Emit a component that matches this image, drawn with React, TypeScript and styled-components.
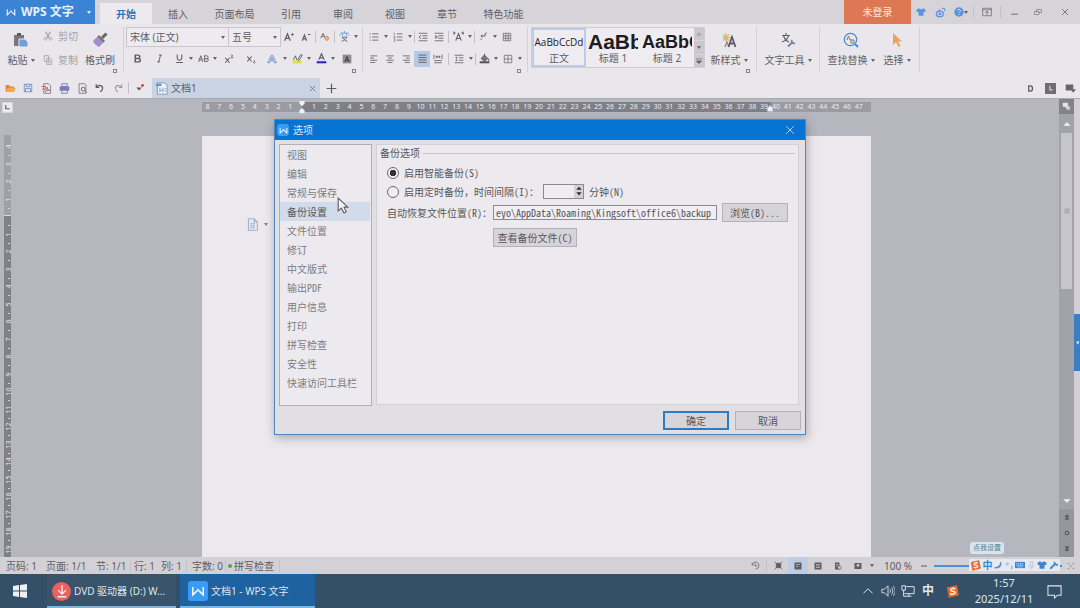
import React from "react";
import styled, { createGlobalStyle, css } from "styled-components";

const ui = `"Noto Sans", "Noto Sans CJK SC", sans-serif`;
const song = `"Noto Sans Mono CJK SC", "Liberation Mono", "Noto Sans CJK SC", monospace`;

const GlobalStyle = createGlobalStyle`
  * { box-sizing: border-box; }
  body { margin: 0; font: 10px/14px ${ui}; color: #5f5d63; background: #b7b7bf; }
  button, input, select { font: inherit; color: inherit; margin: 0; padding: 0; border: 0; background: none; border-radius: 0; }
  a { color: inherit; text-decoration: none; }
  ul { list-style: none; margin: 0; padding: 0; }
`;

/* ---------- shared ---------- */

const Svg = styled.svg<{ $s?: number }>`
  width: ${(p) => p.$s ?? 12}px;
  height: ${(p) => p.$s ?? 12}px;
  flex: none;
  display: block;
  fill: none;
  stroke: currentColor;
  stroke-width: 1.3;
`;

type IconProps = { s?: number; children: React.ReactNode; color?: string };
const Icon = ({ s, children, color }: IconProps) => (
  <Svg $s={s} viewBox="0 0 16 16" color={color} aria-hidden="true">
    {children}
  </Svg>
);

const Caret = styled.i`
  flex: none;
  width: 0;
  height: 0;
  border: 2px solid transparent;
  border-top: 3px solid #66646a;
  border-bottom: 0;
`;

const Spacer = styled.div`
  flex: 1;
`;

const VLine = styled.span<{ $h?: number; $m?: number }>`
  flex: none;
  width: 1px;
  height: ${(p) => p.$h ?? 12}px;
  margin: 0 ${(p) => p.$m ?? 0}px;
  background: #c3c1c8;
`;

const Slot = styled.button<{ $w?: number; $on?: boolean }>`
  flex: none;
  width: ${(p) => p.$w ?? 16}px;
  height: 16px;
  display: flex;
  align-items: center;
  justify-content: center;
  background: ${(p) => (p.$on ? "#b3c9e6" : "none")};
`;

const Drop = ({ label }: { label: string }) => (
  <Slot $w={8} aria-label={label}>
    <Caret />
  </Slot>
);

const WMark = () => (
  <path d="M2 3.5v9l5.2-5M14 3.5v9l-5.2-5M7.2 7.5 8 6.5l.8 1" strokeWidth="1.8" />
);

/* ---------- window ---------- */

const Screen = styled.div`
  min-height: 100vh;
  display: flex;
  flex-direction: column;
`;

const AppWindow = styled.main`
  position: relative;
  flex: 1;
  display: flex;
  flex-direction: column;
`;

const TitleBar = styled.header`
  display: flex;
  align-items: flex-end;
  height: 24px;
  background: #d6d3d9;
`;

const Brand = styled.button`
  align-self: stretch;
  display: flex;
  align-items: center;
  width: 95px;
  padding: 0 4px 0 6px;
  gap: 5px;
  background: #3b83d5;
  color: #e9f0f9;
  font-size: 12px;
  font-weight: 700;
  white-space: nowrap;
  ${Caret} {
    margin-left: auto;
    border-top-color: #e9f0f9;
  }
`;

const Tabs = styled.nav`
  display: flex;
  margin-left: 5px;
`;

const Tab = styled.a<{ $on?: boolean; $wide?: boolean }>`
  width: ${(p) => (p.$wide ? 61 : 52)}px;
  height: 21px;
  padding-top: 4px;
  text-align: center;
  ${(p) =>
    p.$on &&
    css`
      background: #eceaee;
      color: #3172bd;
      font-weight: 700;
    `}
`;

const Login = styled.button`
  align-self: stretch;
  width: 67px;
  background: #dc7854;
  color: #f6e6e0;
`;

const WindowTools = styled.div`
  align-self: stretch;
  display: flex;
  align-items: center;
  color: #727076;
`;

/* ---------- ribbon ---------- */

const Ribbon = styled.section`
  display: flex;
  height: 54px;
  background: #e9e7eb;
`;

const Group = styled.div<{ $w: number; $pad?: number }>`
  flex: none;
  position: relative;
  width: ${(p) => p.$w}px;
  padding: 3px 0 0 ${(p) => p.$pad ?? 0}px;
  display: flex;
  &::after {
    content: "";
    position: absolute;
    right: 0;
    top: 3px;
    height: 45px;
    width: 1px;
    background: #d3d1d7;
  }
`;

const Launcher = styled.button`
  position: absolute;
  right: 7px;
  bottom: 5px;
  width: 4px;
  height: 4px;
  border: 1px solid #86848a;
`;

const BigButton = styled.button<{ $w: number }>`
  flex: none;
  width: ${(p) => p.$w}px;
  height: 46px;
  display: flex;
  flex-direction: column;
  align-items: center;
  padding-top: 5px;
  gap: 5px;
  white-space: nowrap;
`;

const Label = styled.span`
  display: flex;
  align-items: center;
  gap: 3px;
`;

const Stack = styled.div<{ $gap?: number }>`
  display: flex;
  flex-direction: column;
  gap: ${(p) => p.$gap ?? 6}px;
`;

const SmallButton = styled.button`
  display: flex;
  align-items: center;
  gap: 5px;
  height: 18px;
  width: 42px;
  padding-left: 2px;
  color: #a3a1a7;
`;

const ToolRow = styled.div<{ $pad?: number }>`
  display: flex;
  align-items: center;
  height: 19px;
  padding-left: ${(p) => p.$pad ?? 0}px;
`;

const Combo = styled.span<{ $w: number }>`
  position: relative;
  width: ${(p) => p.$w}px;
  height: 20px;
  margin-right: -1px;
  border: 1px solid #c8c6cc;
  background: #edebef;
  select {
    width: 100%;
    height: 18px;
    padding-left: 3px;
    appearance: none;
    outline: 0;
  }
  ${Caret} {
    position: absolute;
    right: 3px;
    top: 8px;
    pointer-events: none;
  }
`;

const Gallery = styled.div`
  display: flex;
  width: 174px;
  height: 41px;
  border: 1px solid #cfcdd4;
  background: #eeecf0;
`;

const StyleCard = styled.button<{ $on?: boolean }>`
  flex: none;
  width: 54px;
  overflow: hidden;
  border: 2px solid ${(p) => (p.$on ? "#bdcce6" : "transparent")};
  display: flex;
  flex-direction: column;
  align-items: center;
`;

const Sample = styled.span<{ $size: number; $bold?: boolean }>`
  height: 22px;
  width: 50px;
  overflow: hidden;
  text-align: ${(p) => (p.$bold ? "left" : "center")};
  white-space: nowrap;
  color: #1d1c1f;
  line-height: 24px;
  font-family: ${(p) => (p.$bold ? `"Liberation Sans", sans-serif` : `"Open Sans", sans-serif`)};
  font-size: ${(p) => p.$size}px;
  font-weight: ${(p) => (p.$bold ? 700 : 400)};
`;

const GalleryScroll = styled.div`
  flex: 1;
  display: flex;
  flex-direction: column;
  background: #cac8ce;
  button {
    flex: 1;
    display: flex;
    align-items: center;
    justify-content: center;
  }
  button + button {
    border-top: 1px solid #d8d6db;
  }
`;

/* ---------- quick access row ---------- */

const QuickBar = styled.div`
  display: flex;
  align-items: center;
  height: 20px;
  padding-left: 1px;
  background: #e9e7eb;
`;

const DocTab = styled.div`
  display: flex;
  align-items: center;
  align-self: stretch;
  width: 168px;
  padding: 0 4px 0 3px;
  gap: 3px;
  margin-left: 2px;
  background: #c9d3e3;
`;

/* ---------- workspace ---------- */

const Workspace = styled.section`
  flex: 1;
  display: flex;
  background: #b6b6bf;
  border-top: 1px solid #a9a9b0;
`;

const LeftRail = styled.div`
  width: 13px;
  padding: 3px 0 0 2px;
  display: flex;
  flex-direction: column;
`;

const TabStop = styled.button`
  flex: none;
  width: 11px;
  height: 11px;
  background: #eceaee;
  border: 1px solid #d6d4da;
  margin-bottom: 22px;
  display: flex;
  align-items: center;
  justify-content: center;
`;

const VRuler = styled.div`
  flex: 1 0 420px;
  width: 7px;
  margin-left: 2px;
  overflow: hidden;
  color: #e8e7ec;
  font-size: 7px;
  line-height: 9px;
  background: linear-gradient(#a0a0a8 80px, #d8d8dd 80px, #d8d8dd 81px, #808088 81px);
`;

const VList = styled.div`
  display: grid;
  grid-auto-rows: 1fr;
  justify-items: center;
  height: 420px;
  margin-top: 7px;
`;

const VCell = styled.span`
  display: flex;
  flex-direction: column;
  align-items: center;
  i {
    height: 9px;
    width: 9px;
    text-align: center;
    font-style: normal;
    transform: rotate(-90deg);
  }
  &::after {
    content: "";
    width: 2px;
    height: 1px;
    margin-top: 4px;
    background: #d4d4da;
  }
`;

const Canvas = styled.div`
  flex: 1;
  display: flex;
  flex-direction: column;
  align-items: center;
`;

const HRuler = styled.div`
  position: relative;
  display: flex;
  width: 669px;
  height: 10px;
  margin-top: 3px;
  padding-right: 6px;
  color: #ecebf0;
  font-size: 7px;
  line-height: 10px;
  background: linear-gradient(90deg, #9b9ba3 15%, #7f7f87 15%, #7f7f87 85%, #9b9ba3 85%);
  span {
    flex: 1 1 0;
    width: 0;
    display: flex;
    justify-content: center;
  }
`;

const Marker = styled.div<{ $at: number }>`
  position: absolute;
  left: ${(p) => p.$at}%;
  top: -2px;
  margin-left: -7px;
`;

const Paper = styled.article`
  flex: 1;
  width: 669px;
  margin-top: 24px;
  background: #ebe9ee;
  position: relative;
`;

const PasteHint = styled.button`
  position: absolute;
  left: 44px;
  top: 82px;
  display: flex;
  align-items: center;
  gap: 5px;
  opacity: 0.8;
`;

const ScrollRail = styled.div`
  width: 15px;
  display: flex;
  flex-direction: column;
  align-items: center;
  background: #a2a2aa;
  color: #e8e7ec;
`;

const RailTop = styled.button`
  width: 15px;
  height: 15px;
  display: flex;
  align-items: center;
  justify-content: center;
  background: #828289;
`;

const RailButton = styled.button<{ $h?: number; $dark?: boolean }>`
  width: 15px;
  height: ${(p) => p.$h ?? 16}px;
  display: flex;
  align-items: center;
  justify-content: center;
  color: ${(p) => (p.$dark ? "#4c4b50" : "#eeedf1")};
  background: ${(p) => (p.$dark ? "#96969e" : "none")};
`;

const Thumb = styled.div`
  width: 11px;
  height: 156px;
  background: #c6c5cc;
  display: flex;
  align-items: center;
  justify-content: center;
  color: #8d8c93;
`;

const Edge = styled.div`
  width: 6px;
  background: #d2d0d6;
  padding-top: 215px;
`;

const EdgeHandle = styled.button`
  display: flex;
  align-items: center;
  justify-content: center;
  width: 6px;
  height: 57px;
  background: #3e7cc4;
  color: #eef3fa;
`;

/* ---------- dialog ---------- */

const Overlay = styled.div`
  position: absolute;
  inset: 0;
  padding-top: 119px;
  display: flex;
  justify-content: center;
  align-items: flex-start;
`;

const DialogWrap = styled.div`
  position: relative;
`;

const Dialog = styled.section`
  width: 532px;
  border: 1px solid #4f86bd;
  background: #e1dfe3;
  box-shadow: 1px 3px 9px rgba(50, 50, 70, 0.35);
  font-family: ${song};
  color: #57555b;
`;

const DialogTitle = styled.header`
  display: flex;
  align-items: center;
  gap: 4px;
  height: 20px;
  padding: 0 7px 0 2px;
  background: #0874d1;
  color: #dbe9f7;
  font-family: ${ui};
`;

const AppBadge = styled.span<{ $s: number }>`
  flex: none;
  width: ${(p) => p.$s}px;
  height: ${(p) => p.$s}px;
  border-radius: 3px;
  background: #3a9bf5;
  color: #f0f6fd;
  display: flex;
  align-items: center;
  justify-content: center;
`;

const DialogBody = styled.div`
  display: flex;
  gap: 4px;
  padding: 4px 6px 0 4px;
`;

const Sections = styled.ul`
  width: 93px;
  height: 262px;
  padding-bottom: 12px;
  display: grid;
  grid-auto-rows: 1fr;
  border: 1px solid #b1afb3;
  background: #eceaee;
  color: #7d7b81;
`;

const SectionItem = styled.li<{ $on?: boolean }>`
  display: flex;
  align-items: center;
  padding-left: 7px;
  margin-right: 1px;
  ${(p) => p.$on && "background: #d2dbea; color: #57555b;"}
`;

const Pane = styled.form`
  flex: 1;
  height: 261px;
  padding: 1px 3px 0;
  border: 1px solid #d3d1d6;
  background: #eceaee;
`;

const Legend = styled.div`
  display: flex;
  align-items: center;
  gap: 3px;
  &::after {
    content: "";
    flex: 1;
    height: 1px;
    background: #c3c1c6;
  }
`;

const Field = styled.div<{ $h?: number; $pad?: number }>`
  display: flex;
  align-items: center;
  height: ${(p) => p.$h ?? 19}px;
  padding-left: ${(p) => p.$pad ?? 7}px;
  white-space: nowrap;
`;

const Options = styled.div`
  padding-top: 3px;
`;

const Radio = styled.input`
  appearance: none;
  flex: none;
  width: 12px;
  height: 12px;
  margin-right: 5px;
  border: 1px solid #6b696f;
  border-radius: 50%;
  background: #f1eff3;
  &:checked {
    background: radial-gradient(circle, #333136 3px, #f1eff3 3px);
  }
`;

const FieldLabel = styled.label<{ $w?: number }>`
  flex: none;
  ${(p) => p.$w && `width: ${p.$w}px;`}
`;

const Spin = styled.div`
  display: flex;
  width: 41px;
  height: 15px;
  border: 1px solid #8c8a90;
  background: #efedf1;
  margin-right: 5px;
  input {
    flex: 1;
    min-width: 0;
  }
`;

const SpinButtons = styled.div`
  width: 9px;
  display: flex;
  flex-direction: column;
  background: #d3d1d6;
  color: #2e2d31;
  button {
    height: 6px;
    display: flex;
    align-items: center;
    justify-content: center;
  }
`;

const PathInput = styled.input`
  width: 224px;
  height: 15px;
  padding: 0 2px;
  border: 1px solid #8c8a90;
  background: #f0eef2;
`;

const PushButton = styled.button<{ $w: number; $main?: boolean }>`
  width: ${(p) => p.$w}px;
  height: 19px;
  border: ${(p) => (p.$main ? "2px solid #2b7cc4" : "1px solid #b4b2b7")};
  background: #d7d4d9;
`;

const DialogFooter = styled.footer`
  display: flex;
  justify-content: flex-end;
  gap: 6px;
  padding: 5px 4px 4px;
`;

const Pointer = styled.div`
  position: absolute;
  left: 61px;
  top: 78px;
`;

/* ---------- status bar ---------- */

const StatusBar = styled.footer`
  display: flex;
  align-items: center;
  height: 17px;
  padding-left: 6px;
  background: #d3d1d6;
  white-space: nowrap;
`;

const Stat = styled.span<{ $w: number; $pad?: number }>`
  flex: none;
  width: ${(p) => p.$w}px;
  padding-left: ${(p) => p.$pad ?? 0}px;
`;

const Dot = styled.i`
  width: 4px;
  height: 4px;
  border-radius: 50%;
  background: #4ea64a;
  margin: 0 2px;
`;

const ViewButton = styled.button<{ $on?: boolean }>`
  width: 20px;
  height: 17px;
  display: flex;
  align-items: center;
  justify-content: center;
  background: ${(p) => (p.$on ? "#bccde4" : "none")};
`;

const Zoom = styled.input`
  appearance: none;
  width: 128px;
  height: 2px;
  background: #4b8fd8;
  margin-left: 6px;
  &::-webkit-slider-thumb {
    appearance: none;
    width: 9px;
    height: 9px;
    border: 1px solid #8d8b91;
    border-radius: 50%;
    background: #e3e1e6;
  }
`;

const ImeBar = styled.div`
  position: absolute;
  right: 20px;
  bottom: 3px;
  width: 91px;
  height: 12px;
  padding: 0 1px;
  display: flex;
  align-items: center;
  justify-content: space-between;
  background: #e6e9f0;
  color: #3f86d2;
  font-weight: 700;
`;

const Bubble = styled.div`
  position: absolute;
  right: 76px;
  bottom: 20px;
  padding: 0 3px;
  border-radius: 3px;
  background: #d9e5ee;
  color: #4c7f92;
  font-size: 7px;
  line-height: 12px;
`;

/* ---------- taskbar ---------- */

const Taskbar = styled.footer`
  display: flex;
  align-items: center;
  height: 34px;
  background: #345068;
  color: #dfe6ec;
`;

const Start = styled.button`
  width: 47px;
  height: 34px;
  display: flex;
  align-items: center;
  padding-left: 12px;
`;

const Task = styled.button<{ $w: number; $on?: boolean }>`
  width: ${(p) => p.$w}px;
  height: 34px;
  margin-right: 4px;
  padding: 2px 0 0 ${(p) => (p.$on ? 8 : 5)}px;
  display: flex;
  align-items: center;
  gap: 3px;
  white-space: nowrap;
  border-bottom: 2px solid #7fb4e0;
  background: ${(p) => (p.$on ? "#1e639f" : "#38536a")};
`;

const RoundBadge = styled.span`
  width: 19px;
  height: 19px;
  border-radius: 50%;
  background: #ee5f5f;
  color: #fbeaea;
  display: flex;
  align-items: center;
  justify-content: center;
`;

const Tray = styled.button<{ $w?: number }>`
  width: ${(p) => p.$w ?? 20}px;
  height: 34px;
  display: flex;
  align-items: center;
  justify-content: center;
  font-size: 12px;
  font-weight: 700;
`;

const Clock = styled.time`
  width: 76px;
  text-align: center;
  font-size: 11px;
  line-height: 16px;
`;

const DesktopPeek = styled.button`
  width: 14px;
  height: 34px;
  padding-left: 9px;
`;

/* ---------- icons ---------- */

const lines = (rows: [number, number, number][]) => (
  <path d={rows.map(([x1, x2, y]) => `M${x1} ${y}H${x2}`).join("")} />
);

const Shirt = () => (
  <path d="M5 2 1 4v4h3v6h8V8h3V4l-4-2c-1 2-5 2-6 0z" fill="currentColor" stroke="none" />
);

const Sogou = ({ s }: { s: number }) => (
  <Icon s={s}>
    <path d="M2 3.5 13 1l2 11L4 15z" fill="#e46a2c" stroke="#e46a2c" />
    <path d="M11.5 4.5c-3-1-6 0-5.500 2 .5 1.500 5 .8 5.300 2.700.3 2-3.600 2.600-6 1.500" stroke="#fbeee6" strokeWidth="2" />
  </Icon>
);

const Pic = {
  paste: (
    <Icon s={16}>
      <path d="M1 3h10v11H1z" fill="#7a787e" stroke="none" />
      <path d="M4 1h4v3H4z" fill="#5d5b61" stroke="none" />
      <path d="M6 7h6l3 3v5H6z" fill="#6f9fdd" stroke="#e9e7eb" strokeWidth="1" />
    </Icon>
  ),
  cut: (
    <Icon s={10}>
      <path d="M4 1l6 10M12 1L6 11" strokeWidth="1.800" />
      <circle cx="4" cy="12.500" r="2.200" />
      <circle cx="12" cy="12.500" r="2.200" />
    </Icon>
  ),
  copy: (
    <Icon s={10}>
      <path d="M2 1h7v9H2zM6 5h5l3 3v7H6z" fill="#e9e7eb" />
      <path d="M8 9h4M8 12h4" />
    </Icon>
  ),
  brush: (
    <Icon s={16}>
      <path d="M14.500 1.500 10 6" stroke="#69676d" strokeWidth="3" />
      <path d="M7 3l6 6-2 2-6-6z" fill="#77757b" stroke="none" />
      <path d="M5 5l6 6-4 4c-2-1-5-3-6-6z" fill="#a48bd0" stroke="none" />
    </Icon>
  ),
  grow: (
    <Icon s={10}>
      <path d="M1 14 5.500 3 10 14M3 10h5" strokeWidth="2" />
      <path d="M11 4h5M13.500 1.500v5" />
    </Icon>
  ),
  shrink: (
    <Icon s={10}>
      <path d="M2 14 5.500 5 9 14M3.500 11h4M11 4h4" strokeWidth="1.800" />
    </Icon>
  ),
  clear: (
    <Icon s={10}>
      <path d="M1 10 5 2l3 7M3 7h4" />
      <path d="M7 10l4-4 4 4-4 4z" fill="#eab07a" stroke="#cf8a4f" />
    </Icon>
  ),
  pinyin: (
    <Icon s={11}>
      <path d="M8 0v3M2 3h12M5 3v4M11 3v4M2 5l-1 2M14 5l1 2" stroke="#6f9bd6" />
      <path d="M4 9h8M5 9c1 3 4 5 7 6M11 9c-1 3-4 5-7 6" />
    </Icon>
  ),
  bold: <Icon s={9}><path d="M4 2h5a3 3 0 010 6H4zm0 6h6a3 3 0 010 6H4z" strokeWidth="2.600" /></Icon>,
  italic: <Icon s={9}><path d="M7 2h5M4 14h5M10 2 6.500 14" strokeWidth="1.700" /></Icon>,
  under: <Icon s={9}><path d="M4 1v6a4 4 0 008 0V1M2 15h12" strokeWidth="1.900" /></Icon>,
  strike: (
    <Icon s={11}>
      <path d="M1 13 4 4l3 9M2 10h4M9.500 4h3a2 2 0 010 4.300h-3zm0 4.300h3.300a2 2 0 010 4.200H9.500z" />
      <path d="M0 8.500h16" stroke="#b98a7d" strokeWidth="1" />
    </Icon>
  ),
  sup: <Icon s={10}><path d="M2 6l7 8M9 6l-7 8" strokeWidth="1.800" /><path d="M11 2c3-2 4 1 0 4h4" /></Icon>,
  sub: <Icon s={10}><path d="M2 4l7 8M9 4l-7 8" strokeWidth="1.800" /><path d="M12 11c2-1 3 0 0 3h3" /></Icon>,
  outline: (
    <Icon s={10}>
      <path d="M1 14 7 2h2l6 12h-3l-1-3H5l-1 3zM6 9h4L8 5z" stroke="#5b83c8" strokeWidth="1.200" />
    </Icon>
  ),
  highlight: (
    <Icon s={11}>
      <path d="M1 11h13v4H1z" fill="#e3dc36" stroke="none" />
      <path d="M2 10 5 4l2 6M8 10l5-8 2 1-5 8z" />
    </Icon>
  ),
  color: (
    <Icon s={11}>
      <path d="M4 10 8 1l4 9M5.500 7h5" strokeWidth="1.700" />
      <path d="M1 12h14v3H1z" fill="#2422c8" stroke="none" />
    </Icon>
  ),
  shade: (
    <Icon s={10}>
      <path d="M1 1h14v14H1z" fill="#8f8d93" stroke="none" />
      <path d="M4.500 13 8 4l3.500 9M6 10h4" stroke="#3c3a40" strokeWidth="1.600" />
    </Icon>
  ),
  bullets: <Icon s={10}>{lines([[5, 15, 3], [5, 15, 8], [5, 15, 13], [1, 3, 3], [1, 3, 8], [1, 3, 13]])}</Icon>,
  numbers: (
    <Icon s={10}>
      {lines([[6, 15, 3], [6, 15, 8], [6, 15, 13]])}
      <path d="M2 1v4M1 7h2v2H1M1 11h2v4H1" strokeWidth="1" />
    </Icon>
  ),
  outdent: <Icon s={10}>{lines([[1, 15, 2], [7, 15, 6], [7, 15, 10], [1, 15, 14]])}<path d="M5 5 1.500 8 5 11" /></Icon>,
  indent: <Icon s={10}>{lines([[1, 15, 2], [7, 15, 6], [7, 15, 10], [1, 15, 14]])}<path d="M1.500 8H7M3 5v6" /></Icon>,
  scale: (
    <Icon s={11}>
      <path d="M4 14 8 4l4 10M5.500 11h5" strokeWidth="1.600" />
      <path d="M1 1v4l2.500-2zM15 1v4l-2.500-2z" fill="currentColor" strokeWidth=".8" />
    </Icon>
  ),
  flow: <Icon s={9}><path d="M11 2v5H4M6 5 3.500 7 6 10M12 2h2M3 13h2" strokeWidth="1.700" /></Icon>,
  table: <Icon s={10}><path d="M2 2h12v12H2zM2 6h12M2 10h12M6 2v12M10 2v12" strokeWidth="1.100" /></Icon>,
  left: <Icon s={10}>{lines([[2, 13, 3], [2, 8, 6.5], [2, 13, 10], [2, 10, 13.5]])}</Icon>,
  center: <Icon s={10}>{lines([[2, 14, 3], [5, 11, 6.5], [2, 14, 10], [4, 12, 13.5]])}</Icon>,
  right: <Icon s={10}>{lines([[3, 14, 3], [8, 14, 6.5], [3, 14, 10], [6, 14, 13.5]])}</Icon>,
  justify: <Icon s={11}>{lines([[2, 14, 3], [2, 14, 6.5], [2, 14, 10], [2, 14, 13.5]])}</Icon>,
  distribute: (
    <Icon s={10}>
      {lines([[2, 14, 10.5], [2, 14, 14]])}
      <path d="M1.500 1v7M14.500 1v7M4 4.500h8M6 2.500v4M10 2.500v4" />
    </Icon>
  ),
  spacing: <Icon s={10}>{lines([[1, 15, 2], [8, 15, 6], [8, 15, 10], [1, 15, 14]])}<path d="M4 5v6M2 6.500 4 4.500l2 2M2 9.500l2 2 2-2" strokeWidth="1" /></Icon>,
  fill: (
    <Icon s={11}>
      <path d="M3 8 8 3l5 5-5 4z" fill="#77757b" />
      <path d="M8 1v4M14 8v4" />
      <path d="M1 12h14v3H1z" fill="#55535a" stroke="none" />
    </Icon>
  ),
  borders: <Icon s={10}><path d="M2 2h12v12H2zM8 2v12M2 8h12" strokeWidth="1.100" /></Icon>,
  newStyle: (
    <Icon s={16}>
      <path d="M5 1v9M1 5.500h9M2 2.500l6 6M8 2.500l-6 6" stroke="#e3b55c" strokeWidth="1.200" />
      <path d="M4 15l2-5 2 5" stroke="#8a888e" />
      <path d="M7.500 15 11 5l3.500 10M9 11.500h4" strokeWidth="1.800" />
    </Icon>
  ),
  textTool: (
    <Icon s={16}>
      <path d="M6 1v2M2 3.500h8M3.500 3.500c1 4 3 5.500 5.500 6.500M8.500 3.500C8 7 5 9 2 10" strokeWidth="1.100" />
      <path d="M8 14.500l4-4M12 8c-1 2 1 4 3 3" stroke="#76859d" strokeWidth="1.800" />
    </Icon>
  ),
  find: (
    <Icon s={16}>
      <circle cx="7.500" cy="7.500" r="6.200" stroke="#4b8ccd" />
      <path d="M12 12l3 3" stroke="#4b8ccd" strokeWidth="2" />
      <path d="M4 8l1.500-4L7 8M8 7v4h3V8H8" stroke="#8a7866" strokeWidth="1" />
    </Icon>
  ),
  select: (
    <Icon s={16}>
      <path d="M4 1v12l3-3 2.500 5 2-1L9 9.500h4z" fill="#e8a262" stroke="none" />
    </Icon>
  ),
};

const Quick = {
  open: <Icon s={11}><path d="M1 3h5l1 2h6v8H1z" fill="#d98a2e" stroke="none" /><path d="M4 7h12l-3 6H1z" fill="#f0a94c" stroke="none" /></Icon>,
  save: <Icon s={10} color="#5c86c4"><path d="M2 2h12v12H2zM5 2v4h6V2M4 14V9h8v5" /></Icon>,
  pdf: <Icon s={11}><path d="M4 1h7l3 3v11H4z" strokeWidth="1" /><path d="M1 5h6v4H2M6 13c4-3 3-7 3-7s0 4 4 5c-3-1-5 0-7 2z" stroke="#c9504a" /></Icon>,
  print: <Icon s={11} color="#777bb8"><path d="M4 1h8v4H4zM4 10h8v5H4z" /><path d="M1 5h14v6H1z" fill="currentColor" stroke="none" /></Icon>,
  preview: <Icon s={11}><path d="M3 1h8l2 2v12H3z" strokeWidth="1" /><circle cx="9" cy="9" r="2.800" /><path d="M11 11l3 3" /></Icon>,
  undo: <Icon s={10}><path d="M2 2v5h5M2.500 6.500C6 2 13 4 12 9c0 2-2 4-4 5" strokeWidth="2" /></Icon>,
  redo: <Icon s={10} color="#9c9aa0"><path d="M14 2v5H9M13.500 6.500C10 2 3 4 4 9c0 2 2 4 4 5" strokeWidth="1.700" /></Icon>,
  more: <Icon s={10}><path d="M2 7h9l-4.500 5z" fill="currentColor" stroke="none" /><circle cx="12" cy="4" r="2.300" fill="#dd3f36" stroke="none" /></Icon>,
};

/* ---------- data ---------- */

const tabs = ["开始", "插入", "页面布局", "引用", "审阅", "视图", "章节", "特色功能"];
const sections = ["视图", "编辑", "常规与保存", "备份设置", "文件位置", "修订", "中文版式", "输出PDF", "用户信息", "打印", "拼写检查", "安全性", "快速访问工具栏"];
const hMarks = [8, 7, 6, 5, 4, 3, 2, 1, "", ...Array.from({ length: 47 }, (_, i) => i + 1)];
const vMarks = [4, 3, 2, 1, "", ...Array.from({ length: 19 }, (_, i) => i + 1)];

export default function App() {
  return (
    <Screen>
      <GlobalStyle />
      <AppWindow>
        <TitleBar>
          <Brand>
            <Icon s={10}><WMark /></Icon>
            WPS 文字
            <Caret />
          </Brand>
          <Tabs>
            {tabs.map((t, i) => (
              <Tab key={t} href="#" $on={i === 0} $wide={t.length > 2}>{t}</Tab>
            ))}
          </Tabs>
          <Spacer />
          <Login>未登录</Login>
          <WindowTools>
            <Slot $w={20} aria-label="皮肤"><Icon s={10} color="#5d92dc"><Shirt /></Icon></Slot>
            <Slot $w={18} aria-label="微博">
              <Icon s={11} color="#5d92dc">
                <ellipse cx="7" cy="10" rx="5" ry="4" strokeWidth="2" />
                <circle cx="7" cy="10" r="1.500" fill="currentColor" />
                <path d="M10 2c3-1 5 1 4 4M5 5l3-1" strokeWidth="1.600" />
              </Icon>
            </Slot>
            <Slot $w={24} aria-label="帮助">
              <Icon s={10}>
                <circle cx="8" cy="8" r="7.500" fill="#5d92dc" stroke="none" />
                <path d="M5.500 6c0-3 5-3 5 0 0 2-2.500 1.500-2.500 4M8 11.500v1.500" stroke="#dfe8f5" />
              </Icon>
              <Caret />
            </Slot>
            <VLine />
            <Slot $w={26} aria-label="功能区"><Icon s={10}><path d="M1 2h14v12H1zM1 4.500h14M8 13V7M5 9.500 8 6.500l3 3" /></Icon></Slot>
            <VLine />
            <Slot $w={26} aria-label="最小化"><Icon s={9}><path d="M2 11h12" strokeWidth="1.800" /></Icon></Slot>
            <Slot $w={22} aria-label="还原"><Icon s={8}><path d="M1 7h9v6H1zM5 7V3h10v6h-5" /></Icon></Slot>
            <Slot $w={31} aria-label="关闭"><Icon s={8}><path d="M2 2l12 12M14 2 2 14" strokeWidth="1.800" /></Icon></Slot>
          </WindowTools>
        </TitleBar>

        <Ribbon>
          <Group $w={124} $pad={1}>
            <BigButton $w={40}>{Pic.paste}<Label>粘贴<Caret /></Label></BigButton>
            <Stack>
              <SmallButton>{Pic.cut}剪切</SmallButton>
              <SmallButton>{Pic.copy}复制</SmallButton>
            </Stack>
            <BigButton $w={34}>{Pic.brush}<Label>格式刷</Label></BigButton>
            <Launcher aria-label="剪贴板" />
          </Group>

          <Group $w={239} $pad={2}>
            <Stack $gap={3}>
              <ToolRow>
                <Combo $w={103}>
                  <select aria-label="字体"><option>宋体 (正文)</option></select>
                  <Caret />
                </Combo>
                <Combo $w={53}>
                  <select aria-label="字号"><option>五号</option></select>
                  <Caret />
                </Combo>
                <Slot $w={18} aria-label="增大字号">{Pic.grow}</Slot>
                <Slot aria-label="减小字号">{Pic.shrink}</Slot>
                <VLine $m={1} />
                <Slot aria-label="清除格式">{Pic.clear}</Slot>
                <VLine $m={1} />
                <Slot aria-label="拼音指南">{Pic.pinyin}</Slot>
                <Drop label="拼音选项" />
              </ToolRow>
              <ToolRow $pad={1}>
                <Slot $w={20} aria-label="加粗">{Pic.bold}</Slot>
                <Slot $w={24} aria-label="倾斜">{Pic.italic}</Slot>
                <Slot aria-label="下划线">{Pic.under}</Slot>
                <Drop label="下划线选项" />
                <Slot aria-label="删除线">{Pic.strike}</Slot>
                <Drop label="删除线选项" />
                <Slot $w={20} aria-label="上标">{Pic.sup}</Slot>
                <Slot $w={24} aria-label="下标">{Pic.sub}</Slot>
                <Slot $w={18} aria-label="文字效果">{Pic.outline}</Slot>
                <Drop label="文字效果选项" />
                <Slot aria-label="突出显示">{Pic.highlight}</Slot>
                <Drop label="突出显示选项" />
                <Slot aria-label="字体颜色">{Pic.color}</Slot>
                <Drop label="字体颜色选项" />
                <Slot $w={20} aria-label="字符底纹">{Pic.shade}</Slot>
              </ToolRow>
            </Stack>
            <Launcher aria-label="字体设置" />
          </Group>

          <Group $w={165} $pad={3}>
            <Stack $gap={3}>
              <ToolRow>
                <Slot aria-label="项目符号">{Pic.bullets}</Slot>
                <Drop label="项目符号选项" />
                <Slot aria-label="编号">{Pic.numbers}</Slot>
                <Drop label="编号选项" />
                <VLine />
                <Slot aria-label="减少缩进">{Pic.outdent}</Slot>
                <Slot aria-label="增加缩进">{Pic.indent}</Slot>
                <VLine $m={1} />
                <Slot aria-label="中文版式">{Pic.scale}</Slot>
                <Drop label="中文版式选项" />
                <VLine />
                <Slot aria-label="显示标记">{Pic.flow}</Slot>
                <Drop label="显示标记选项" />
                <Slot aria-label="制表位">{Pic.table}</Slot>
              </ToolRow>
              <ToolRow>
                <Slot aria-label="左对齐">{Pic.left}</Slot>
                <Slot aria-label="居中">{Pic.center}</Slot>
                <Slot aria-label="右对齐">{Pic.right}</Slot>
                <Slot $on aria-label="两端对齐">{Pic.justify}</Slot>
                <Slot aria-label="分散对齐">{Pic.distribute}</Slot>
                <VLine $m={2} />
                <Slot aria-label="行距">{Pic.spacing}</Slot>
                <Drop label="行距选项" />
                <VLine />
                <Slot aria-label="底纹">{Pic.fill}</Slot>
                <Drop label="底纹选项" />
                <Slot aria-label="边框">{Pic.borders}</Slot>
                <Drop label="边框选项" />
              </ToolRow>
            </Stack>
            <Launcher aria-label="段落设置" />
          </Group>

          <Group $w={229} $pad={3}>
            <Gallery>
              <StyleCard $on><Sample $size={10}>AaBbCcDd</Sample>正文</StyleCard>
              <StyleCard><Sample $size={21} $bold>AaBb</Sample>标题 1</StyleCard>
              <StyleCard><Sample $size={18} $bold>AaBbC</Sample>标题 2</StyleCard>
              <GalleryScroll>
                <button aria-label="向上"><Icon s={6} color="#a5a3a9"><path d="M2 11l6-7 6 7z" fill="currentColor" /></Icon></button>
                <button aria-label="向下"><Caret /></button>
                <button aria-label="更多样式"><Icon s={8}><path d="M2 4h12M3 8l5 5 5-5z" fill="currentColor" /></Icon></button>
              </GalleryScroll>
            </Gallery>
            <BigButton $w={48}>{Pic.newStyle}<Label>新样式<Caret /></Label></BigButton>
            <Launcher aria-label="样式设置" />
          </Group>

          <Group $w={63}>
            <BigButton $w={62}>{Pic.textTool}<Label>文字工具<Caret /></Label></BigButton>
          </Group>

          <Group $w={100} $pad={6}>
            <BigButton $w={50}>{Pic.find}<Label>查找替换<Caret /></Label></BigButton>
            <BigButton $w={42}>{Pic.select}<Label>选择<Caret /></Label></BigButton>
          </Group>
        </Ribbon>

        <QuickBar>
          <Slot $w={18} aria-label="打开">{Quick.open}</Slot>
          <Slot $w={18} aria-label="保存">{Quick.save}</Slot>
          <Slot $w={18} aria-label="输出PDF">{Quick.pdf}</Slot>
          <Slot $w={18} aria-label="打印">{Quick.print}</Slot>
          <Slot $w={18} aria-label="打印预览">{Quick.preview}</Slot>
          <Slot $w={18} aria-label="撤消">{Quick.undo}</Slot>
          <Slot $w={18} aria-label="恢复">{Quick.redo}</Slot>
          <VLine $m={1} />
          <Slot $w={20} aria-label="更多">{Quick.more}</Slot>
          <DocTab>
            <Icon s={13}>
              <path d="M3 1h9l3 3v11H3z" fill="#eef1f6" stroke="#8ea0b8" />
              <path d="M1 2h7v3H1z" fill="#5f97da" stroke="none" />
              <path d="M6 7v6M10 7v6M6 10h4M12 8h2M12 11h2" stroke="#7f97b8" strokeWidth="1" />
            </Icon>
            文档1
            <Spacer />
            <Slot $w={8} aria-label="关闭文档"><Icon s={7}><path d="M2 2l12 12M14 2 2 14" strokeWidth="1.600" /></Icon></Slot>
          </DocTab>
          <Slot $w={22} aria-label="新建"><Icon s={11}><path d="M8 1v14M1 8h14" strokeWidth="1.800" /></Icon></Slot>
          <Spacer />
          <Slot $w={20} aria-label="文档"><Icon s={7}><path d="M4 2h4c6 0 6 12 0 12H4z" strokeWidth="3" /></Icon></Slot>
          <Slot $w={20} aria-label="标签">
            <Icon s={11}><path d="M0 0h16v16H0z" fill="#6f6d74" stroke="none" /><path d="M7 4v6h4" stroke="#d8d6db" strokeWidth="1.600" /></Icon>
          </Slot>
          <Slot $w={20} aria-label="列表">
            <Icon s={11}><path d="M1 2h11v9H1zM8 9h8l-4 5z" fill="#68666c" stroke="none" /></Icon>
          </Slot>
        </QuickBar>

        <Workspace>
          <LeftRail>
            <TabStop aria-label="制表符"><Icon s={7}><path d="M4 2v9h9" strokeWidth="2.500" /></Icon></TabStop>
            <VRuler>
              <VList>
                {vMarks.map((m, i) => (
                  <VCell key={i}><i>{m}</i></VCell>
                ))}
              </VList>
            </VRuler>
          </LeftRail>
          <Canvas>
            <HRuler>
              {hMarks.map((m, i) => (
                <span key={i}>{m}</span>
              ))}
              <Marker $at={15}>
                <Svg viewBox="0 0 8 16" $s={14}>
                  <path d="M1 1h6v3L4 7 1 4zM1 12l3-3 3 3v3H1z" fill="#f1f0f4" stroke="none" />
                </Svg>
              </Marker>
              <Marker $at={85}>
                <Svg viewBox="0 0 8 16" $s={14}>
                  <path d="M1 10l3-4 3 4v3H1z" fill="#f1f0f4" stroke="none" />
                </Svg>
              </Marker>
            </HRuler>
            <Paper>
              <PasteHint aria-label="粘贴选项">
                <Icon s={13} color="#8fa3c9"><path d="M3 1h7l4 4v10H3zM10 1v4h4M5 7h6M5 9.500h6M5 12h6" /></Icon>
                <Caret />
              </PasteHint>
            </Paper>
          </Canvas>
          <ScrollRail>
            <RailTop aria-label="标尺">
              <Icon s={9}><path d="M2 2h8v6H2z" fill="currentColor" /><path d="M7 6l7 3-2 5-5-3z" fill="#c9c8ce" /></Icon>
            </RailTop>
            <RailButton $h={19} aria-label="向上滚动"><Icon s={8}><path d="M2 11l6-6 6 6z" fill="currentColor" /></Icon></RailButton>
            <Thumb><Icon s={6}><path d="M1 3h14M1 8h14M1 13h14" strokeWidth="2" /></Icon></Thumb>
            <Spacer />
            <RailButton aria-label="向下滚动"><Icon s={8}><path d="M2 5l6 6 6-6z" fill="currentColor" /></Icon></RailButton>
            <RailButton $dark aria-label="上一页"><Icon s={6}><path d="M3 7l5-5 5 5zM3 14l5-5 5 5z" fill="currentColor" /></Icon></RailButton>
            <RailButton $dark aria-label="选择浏览对象"><Icon s={6}><circle cx="8" cy="8" r="5" strokeWidth="2.500" /></Icon></RailButton>
            <RailButton $dark aria-label="下一页"><Icon s={6}><path d="M3 2l5 5 5-5zM3 9l5 5 5-5z" fill="currentColor" /></Icon></RailButton>
          </ScrollRail>
          <Edge>
            <EdgeHandle aria-label="展开窗格"><Icon s={5}><path d="M11 3 4 8l7 5z" fill="currentColor" /></Icon></EdgeHandle>
          </Edge>
        </Workspace>

        <StatusBar>
          <Stat $w={40}>页码: 1</Stat>
          <Stat $w={50}>页面: 1/1</Stat>
          <Stat $w={34}>节: 1/1</Stat>
          <VLine />
          <Stat $w={27} $pad={3}>行: 1</Stat>
          <Stat $w={26} $pad={3}>列: 1</Stat>
          <VLine $m={2} />
          <Stat $w={36} $pad={3}>字数: 0</Stat>
          <VLine />
          <Dot />
          <Stat $w={45}>拼写检查</Stat>
          <VLine />
          <Spacer />
          <ViewButton aria-label="历史"><Icon s={9}><path d="M2 3v4h4M2.500 6A6 6 0 118 14M8 5v4h3" /></Icon></ViewButton>
          <VLine $m={1} />
          <ViewButton aria-label="全屏"><Icon s={9}><path d="M1 1l4 4M15 1l-4 4M1 15l4-4M15 15l-4-4" /><path d="M4 4h8v8H4z" fill="currentColor" /></Icon></ViewButton>
          <ViewButton $on aria-label="页面视图"><Icon s={8}><path d="M1 1h14v14H1z" fill="currentColor" stroke="none" /><path d="M4 5h8M4 9h5" stroke="#bccde4" /></Icon></ViewButton>
          <ViewButton aria-label="大纲"><Icon s={8}><path d="M1 1h14v14H1z" fill="currentColor" stroke="none" /><path d="M4 5h8M4 8h8M4 11h8" stroke="#d3d1d6" /></Icon></ViewButton>
          <ViewButton aria-label="Web版式"><Icon s={8}><path d="M2 1h9v14H2z" fill="currentColor" stroke="none" /><path d="M4 5h5M4 8h4" stroke="#d3d1d6" /><circle cx="11" cy="11" r="3.500" fill="#d3d1d6" /></Icon></ViewButton>
          <ViewButton aria-label="护眼模式"><Icon s={8}><path d="M1 2h14v12H1z" fill="currentColor" stroke="none" /><path d="M8 4v6M5 6h6" stroke="#d3d1d6" strokeWidth="2.500" /></Icon></ViewButton>
          <Drop label="视图选项" />
          <Stat $w={44} $pad={8}>100 %</Stat>
          <Slot $w={8} aria-label="缩小"><Icon s={8}><path d="M2 8h12" strokeWidth="2" /></Icon></Slot>
          <Zoom type="range" aria-label="缩放" defaultValue="42" />
          <Slot $w={18} aria-label="适应窗口"><Icon s={8}><path d="M2 2l3 3M14 2l-3 3M2 14l3-3M14 14l-3-3M6 8h4" strokeWidth="1.600" strokeDasharray="3 1" /></Icon></Slot>
        </StatusBar>

        <ImeBar>
          <Sogou s={11} />
          中
          <Icon s={9}><path d="M12 2c2 8-4 12-11 10 7-1 10-4 11-10z" fill="currentColor" /></Icon>
          <Icon s={9} color="#7aa7de"><circle cx="4" cy="5" r="2" /><path d="M11 9c2 1 2 4 0 5" strokeWidth="2" /></Icon>
          <Icon s={10}><path d="M0 3h16v10H0z" fill="currentColor" stroke="none" /><path d="M2 6h12M2 8.500h12M4 11h8" stroke="#e6e9f0" strokeDasharray="2 1" /></Icon>
          <Icon s={9} color="#b9bcc4"><path d="M6 1h4v8H6zM3 8c0 5 10 5 10 0M8 12v3" /></Icon>
          <Icon s={10}><Shirt /></Icon>
          <Icon s={10}><path d="M2 14l7-7M9 3c-1 3 2 6 5 4" strokeWidth="3" /></Icon>
        </ImeBar>
        <Bubble>点我设置</Bubble>

        <Overlay>
          <DialogWrap>
            <Dialog role="dialog" aria-label="选项">
              <DialogTitle>
                <AppBadge $s={12}><Icon s={9}><WMark /></Icon></AppBadge>
                选项
                <Spacer />
                <Slot aria-label="关闭对话框"><Icon s={10}><path d="M2 2l12 12M14 2 2 14" /></Icon></Slot>
              </DialogTitle>
              <DialogBody>
                <Sections>
                  {sections.map((s) => (
                    <SectionItem key={s} $on={s === "备份设置"}>{s}</SectionItem>
                  ))}
                </Sections>
                <Pane>
                  <Legend>备份选项</Legend>
                  <Options>
                    <Field>
                      <Radio type="radio" name="mode" id="smart" defaultChecked />
                      <FieldLabel htmlFor="smart">启用智能备份(S)</FieldLabel>
                    </Field>
                    <Field>
                      <Radio type="radio" name="mode" id="timed" />
                      <FieldLabel htmlFor="timed" $w={139}>启用定时备份，时间间隔(I)：</FieldLabel>
                      <Spin>
                        <input id="minutes" aria-label="时间间隔" />
                        <SpinButtons>
                          <button type="button" aria-label="增加"><Icon s={6}><path d="M2 12l6-7 6 7z" fill="currentColor" /></Icon></button>
                          <button type="button" aria-label="减少"><Icon s={6}><path d="M2 4l6 7 6-7z" fill="currentColor" /></Icon></button>
                        </SpinButtons>
                      </Spin>
                      <FieldLabel htmlFor="minutes">分钟(N)</FieldLabel>
                    </Field>
                    <Field $h={23}>
                      <FieldLabel htmlFor="path" $w={106}>自动恢复文件位置(R)：</FieldLabel>
                      <PathInput id="path" defaultValue="eyo\AppData\Roaming\Kingsoft\office6\backup" />
                      <Spacer />
                      <PushButton type="button" $w={66}>浏览(B)...</PushButton>
                      <Stat $w={7} />
                    </Field>
                    <Field $h={27} $pad={113}>
                      <PushButton type="button" $w={84}>查看备份文件(C)</PushButton>
                    </Field>
                  </Options>
                </Pane>
              </DialogBody>
              <DialogFooter>
                <PushButton $w={66} $main>确定</PushButton>
                <PushButton $w={66}>取消</PushButton>
              </DialogFooter>
            </Dialog>
            <Pointer>
              <Icon s={17}><path d="M3 1v12l3-2.500 2.500 4.500 2-1L8.500 9.500H12z" fill="#f4f3f6" stroke="#5b595f" strokeWidth="1" /></Icon>
            </Pointer>
          </DialogWrap>
        </Overlay>
      </AppWindow>

      <Taskbar>
        <Start aria-label="开始菜单">
          <Icon s={16}><path d="M1 3l6-1v5.500H1zM8 2l7-1v6.500H8zM1 8.500h6V14l-6-1zM8 8.500h7V15l-7-1z" fill="#eef1f4" stroke="none" /></Icon>
        </Start>
        <Task $w={129}>
          <RoundBadge><Icon s={14}><path d="M8 1v10M3.500 7 8 11.500 12.500 7M3 14.500h10" strokeWidth="1.600" /></Icon></RoundBadge>
          DVD 驱动器 (D:) W...
        </Task>
        <Task $w={135} $on>
          <AppBadge $s={20}><Icon s={14}><WMark /></Icon></AppBadge>
          文档1 - WPS 文字
        </Task>
        <Spacer />
        <Tray aria-label="显示隐藏的图标"><Icon s={12}><path d="M2 11l6-6 6 6" /></Icon></Tray>
        <Tray aria-label="音量"><Icon s={14}><path d="M1 6h3l4-4v12l-4-4H1zM10 6c1 1 1 3 0 4M12 4c2 2 2 6 0 8M14 2.500c3 3 3 8 0 11" strokeWidth="1" /></Icon></Tray>
        <Tray aria-label="网络"><Icon s={14}><path d="M6 3h9v8H4M1 2h4v5H1zM3 7v7M3 14h9M9 11v3" strokeWidth="1.100" /></Icon></Tray>
        <Tray aria-label="输入法">中</Tray>
        <Tray $w={28} aria-label="搜狗输入法"><Sogou s={13} /></Tray>
        <Clock>1:57<br />2025/12/11</Clock>
        <Tray $w={24} aria-label="通知"><Icon s={15}><path d="M1 2h14v10h-4l-3 3v-3H1z" strokeWidth="1.100" /></Icon></Tray>
        <DesktopPeek aria-label="显示桌面"><VLine as="i" $h={34} /></DesktopPeek>
      </Taskbar>
    </Screen>
  );
}
